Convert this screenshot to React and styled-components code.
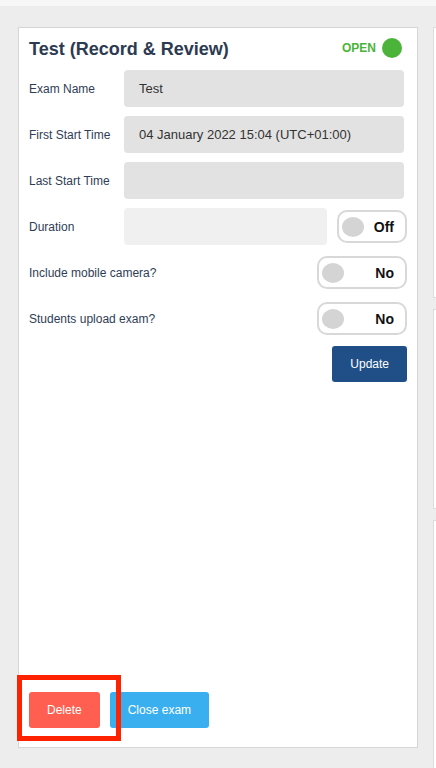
import React from "react";
import styled, { createGlobalStyle } from "styled-components";

const Global = createGlobalStyle`
  html, body { margin: 0; padding: 0; background: #ededed; overflow: hidden; }
  body { font-family: "Liberation Sans", Arial, Helvetica, sans-serif; }
  * { box-sizing: border-box; }
`;

const TopStrip = styled.div`
  height: 6px;
  background: #f7f7f7;
`;

const Main = styled.div`
  display: flex;
  gap: 15px;
  padding: 21px 0 0 18px;
`;

const Card = styled.section`
  position: relative;
  flex: 0 0 400px;
  height: 721px;
  background: #fff;
  border: 1px solid #d6d6d6;
  display: flex;
  flex-direction: column;
  padding: 10px 10px 19px 10px;
`;

const Header = styled.div`
  display: flex;
  align-items: center;
  justify-content: space-between;
  height: 22px;
`;

const Title = styled.h2`
  margin: 0;
  font-size: 18px;
  line-height: 22px;
  font-weight: 700;
  color: #2c3a52;
`;

const Status = styled.div`
  display: flex;
  align-items: center;
  gap: 6px;
  padding-bottom: 3px;
  margin-right: 5px;
  font-size: 12px;
  font-weight: 700;
  color: #4cb33a;
`;

const Dot = styled.span`
  width: 20px;
  height: 20px;
  border-radius: 50%;
  background: #4cb33a;
`;

const Form = styled.div`
  margin-top: 10px;
  display: flex;
  flex-direction: column;
  gap: 9px;
`;

const Row = styled.div`
  display: grid;
  grid-template-columns: 95px 1fr;
  align-items: center;
  height: 37px;
`;

const Label = styled.span`
  font-size: 12px;
  color: #2f3d56;
`;

const Field = styled.div`
  height: 37px;
  margin-right: ${(p) => (p.$inline ? "0" : "3px")};
  flex: ${(p) => (p.$inline ? "1" : "none")};
  border-radius: 4px;
  background: ${(p) => (p.$disabled ? "#f0f0f0" : "#e2e2e2")};
  padding-left: 15px;
  display: flex;
  align-items: center;
  font-size: 13px;
  color: #333;
`;

const FieldGroup = styled.div`
  display: flex;
  align-items: center;
  gap: 10px;
`;

const ToggleRow = styled.div`
  display: flex;
  align-items: center;
  justify-content: space-between;
  height: 37px;
`;

const Toggle = styled.div`
  width: ${(p) => p.$w}px;
  height: 33px;
  border: 2px solid #d8d8d8;
  border-radius: 10px;
  display: flex;
  align-items: center;
  justify-content: space-between;
  padding: 0 11px 0 3px;
  font-size: 14px;
  font-weight: 700;
  color: #111;
  background: #fff;
`;

const Knob = styled.span`
  width: 22px;
  height: 20px;
  border-radius: 50%;
  background: #d4d4d4;
`;

const Actions = styled.div`
  display: flex;
  justify-content: flex-end;
`;

const Button = styled.button`
  height: 36px;
  padding: 0 18px;
  border: none;
  border-radius: 3px;
  font-family: inherit;
  font-size: 12px;
  color: #fff;
  background: ${(p) => p.$bg};
`;

const Footer = styled.div`
  margin-top: auto;
  display: flex;
  gap: 10px;
`;

const Marked = styled.span`
  position: relative;
  display: inline-flex;
`;

const Highlight = styled.span`
  position: absolute;
  left: -12px;
  top: -17px;
  width: 104px;
  height: 66px;
  border: 5px solid #ff2200;
  pointer-events: none;
`;

const Side = styled.div`
  display: flex;
  flex-direction: column;
  gap: 11px;
  flex: 1;
`;

const Panel = styled.div`
  height: ${(p) => p.$h}px;
  background: #fff;
  border: 1px solid #dcdcdc;
  border-right: none;
`;

export default function App() {
  return (
    <>
      <Global />
      <TopStrip />
      <Main>
        <Card>
          <Header>
            <Title>Test (Record &amp; Review)</Title>
            <Status>
              OPEN <Dot />
            </Status>
          </Header>
          <Form>
            <Row>
              <Label>Exam Name</Label>
              <Field>Test</Field>
            </Row>
            <Row>
              <Label>First Start Time</Label>
              <Field>04 January 2022 15:04 (UTC+01:00)</Field>
            </Row>
            <Row>
              <Label>Last Start Time</Label>
              <Field />
            </Row>
            <Row>
              <Label>Duration</Label>
              <FieldGroup>
                <Field $inline $disabled />
                <Toggle $w={70}>
                  <Knob />
                  Off
                </Toggle>
              </FieldGroup>
            </Row>
            <ToggleRow>
              <Label>Include mobile camera?</Label>
              <Toggle $w={90}>
                <Knob />
                No
              </Toggle>
            </ToggleRow>
            <ToggleRow>
              <Label>Students upload exam?</Label>
              <Toggle $w={90}>
                <Knob />
                No
              </Toggle>
            </ToggleRow>
            <Actions>
              <Button $bg="#1f4f86">Update</Button>
            </Actions>
          </Form>
          <Footer>
            <Marked>
              <Button $bg="#ff5f50">Delete</Button>
              <Highlight />
            </Marked>
            <Button $bg="#3aaff0">Close exam</Button>
          </Footer>
        </Card>
        <Side>
          <Panel $h={271} />
          <Panel $h={200} />
          <Panel $h={260} />
        </Side>
      </Main>
    </>
  );
}
